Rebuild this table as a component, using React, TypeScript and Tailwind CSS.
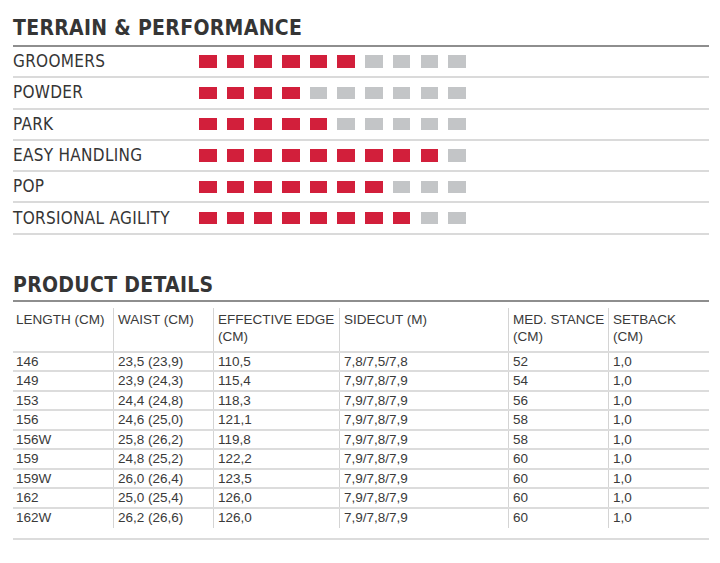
const ratings = [
  { label: "GROOMERS", value: 6 },
  { label: "POWDER", value: 4 },
  { label: "PARK", value: 5 },
  { label: "EASY HANDLING", value: 9 },
  { label: "POP", value: 7 },
  { label: "TORSIONAL AGILITY", value: 8 },
];

const details = [
  ["146", "23,5 (23,9)", "110,5", "7,8/7,5/7,8", "52", "1,0"],
  ["149", "23,9 (24,3)", "115,4", "7,9/7,8/7,9", "54", "1,0"],
  ["153", "24,4 (24,8)", "118,3", "7,9/7,8/7,9", "56", "1,0"],
  ["156", "24,6 (25,0)", "121,1", "7,9/7,8/7,9", "58", "1,0"],
  ["156W", "25,8 (26,2)", "119,8", "7,9/7,8/7,9", "58", "1,0"],
  ["159", "24,8 (25,2)", "122,2", "7,9/7,8/7,9", "60", "1,0"],
  ["159W", "26,0 (26,4)", "123,5", "7,9/7,8/7,9", "60", "1,0"],
  ["162", "25,0 (25,4)", "126,0", "7,9/7,8/7,9", "60", "1,0"],
  ["162W", "26,2 (26,6)", "126,0", "7,9/7,8/7,9", "60", "1,0"],
];

const headers = [
  ["LENGTH (CM)"],
  ["WAIST (CM)"],
  ["EFFECTIVE EDGE", "(CM)"],
  ["SIDECUT (M)"],
  ["MED. STANCE", "(CM)"],
  ["SETBACK", "(CM)"],
];

const cols = "grid grid-cols-[100px_100px_126px_169px_100px_101px]";

function Title({ children }: { children: string }) {
  return (
    <h2 className="font-['DejaVu_Sans_Condensed',sans-serif] text-[21px] leading-[22px] font-bold tracking-[0.3px] text-[#353535]">
      {children}
    </h2>
  );
}

export default function App() {
  return (
    <div className="w-[720px] h-[563px] bg-white px-[13px] pt-[17px] text-[#333]">
      <Title>TERRAIN &amp; PERFORMANCE</Title>
      <div className="mt-[6px] h-[2px] w-[696px] bg-[#8e8e8e]" />
      <div className="w-[696px]">
        {ratings.map((r) => (
          <div
            key={r.label}
            className="flex h-[31.3px] items-center border-b-2 border-[#dadada]"
          >
            <div className="w-[186px] font-['DejaVu_Sans_Condensed',sans-serif] text-[17px] leading-none tracking-[0.3px] text-[#353535]">
              {r.label}
            </div>
            <div className="flex gap-[10.2px]">
              {Array.from({ length: 10 }).map((_, i) => (
                <div
                  key={i}
                  className={
                    i < r.value
                      ? "h-[12.5px] w-[17.5px] bg-[#d21f3b]"
                      : "h-[12.5px] w-[17.5px] bg-[#c3c5c7]"
                  }
                />
              ))}
            </div>
          </div>
        ))}
      </div>

      <div className="mt-[39px]">
        <Title>PRODUCT DETAILS</Title>
      </div>
      <div className="mt-[4px] h-[2px] w-[696px] bg-[#8e8e8e]" />

      <div className="mt-[6px] w-[696px] font-['Liberation_Sans',Arial,sans-serif] text-[13.5px] text-[#3a3a3a]">
        <div className={`${cols} border-b-2 border-[#dcdcdc]`}>
          {headers.map((h, i) => (
            <div
              key={i}
              className={`whitespace-nowrap pt-[3px] pb-[6px] leading-[17px] ${
                i === 0 ? "pl-[3px]" : "border-l border-[#d4d4d4] pl-[4px]"
              }`}
            >
              {h.map((line) => (
                <div key={line}>{line}</div>
              ))}
            </div>
          ))}
        </div>
        {details.map((row, ri) => (
          <div
            key={row[0]}
            className={`${cols} ${
              ri < details.length - 1
                ? "h-[19.5px] border-b-2 border-[#dcdcdc]"
                : "h-[19px]"
            }`}
          >
            {row.map((cell, i) => (
              <div
                key={i}
                className={`leading-[17.5px] ${
                  i === 0 ? "pl-[3px]" : "border-l border-[#d4d4d4] pl-[4px]"
                }`}
              >
                {cell}
              </div>
            ))}
          </div>
        ))}
        <div className="mt-[10px] h-[2px] bg-[#dcdcdc]" />
      </div>
    </div>
  );
}
